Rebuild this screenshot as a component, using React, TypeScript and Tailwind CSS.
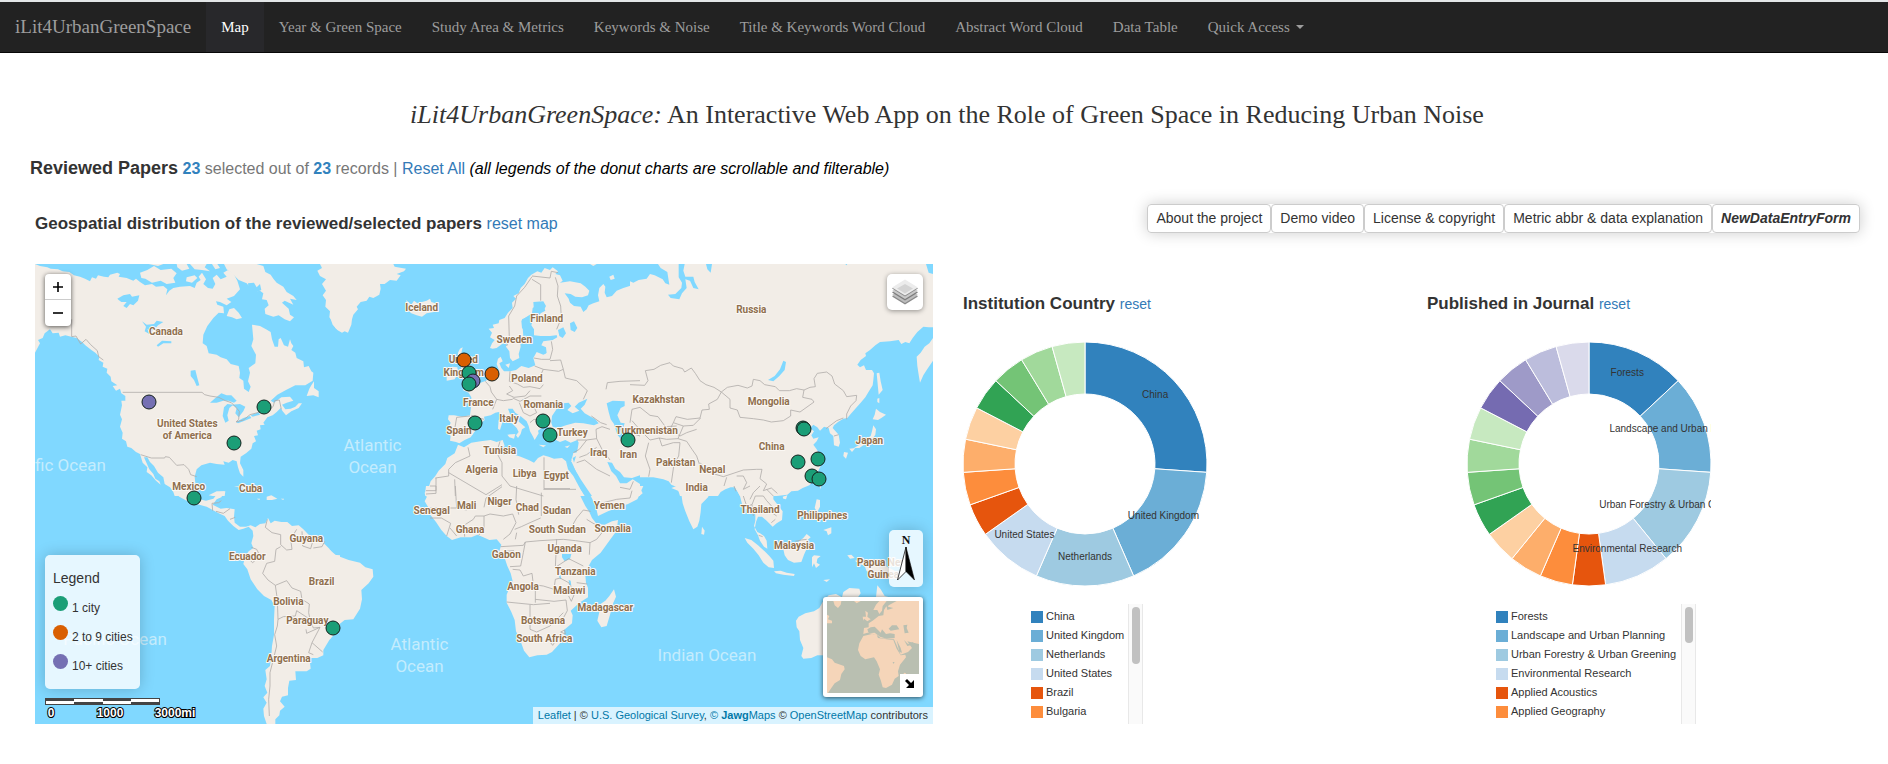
import React from "react";

type Pt = [string, number, number];
type Sheet = { ox: number; oy: number; land: string; water: string; borders: string; labels: Pt[] };

/* The base map is kept as six sheets, each drawn at three units per pixel. */
const sheets: Sheet[] = [
  {
    ox: 30,
    oy: 255,
    land:
      "M15 24L30 30 52 34 62 38 84 40 98 46 118 48 132 58 150 62 165 68 180 76 186 64 198 68 204 58 222 62 235 64 240 56 262 50 270 54 266 62 290 66 310 74 318 68 330 78 345 88 366 84 378 92 400 90 412 100 408 118 418 104 430 96 450 92 480 90 494 96 500 80 512 72 506 62 516 50 528 70 520 84 534 96 548 98 556 84 548 66 560 56 572 70 590 62 580 50 594 42 610 52 622 74 630 100 612 120 590 128 604 138 590 148 570 138 558 136 562 146 580 152 582 172 566 170 550 186 532 210 520 236 518 262 530 270 536 292 560 296 572 304 590 310 602 324 626 330 630 350 628 366 640 374 642 398 656 408 662 392 654 376 660 350 656 336 676 322 678 296 664 270 670 250 666 206 690 210 708 220 722 228 726 250 734 272 744 272 746 250 752 246 762 268 774 272 780 250 784 262 790 270 784 282 796 290 800 306 820 316 822 334 836 330 844 346 850 350 848 374 826 388 796 388 768 402 742 416 722 434 732 440 754 424 780 422 790 434 770 440 756 446 766 460 782 458 796 452 806 442 816 442 806 456 784 466 768 478 758 466 752 456 740 468 728 478 712 484 700 500 704 506 690 508 692 520 680 524 684 538 672 540 678 556 668 562 664 578 648 592 632 602 630 622 640 642 640 662 630 652 624 634 620 616 608 612 596 620 580 616 584 626 560 624 540 620 514 628 500 640 494 662 496 682 502 720 434 720 430 708 420 694 404 684 400 664 384 650 372 630 360 618 352 604 342 604 350 622 358 640 370 654 376 668 388 676 392 686 378 674 364 658 350 648 352 634 338 620 330 594 318 588 304 576 292 572 288 556 276 548 278 530 270 512 276 490 270 476 276 448 274 434 286 434 286 420 274 412 270 398 258 404 248 390 262 388 244 376 242 362 230 350 232 338 218 332 220 320 206 312 208 302 196 290 184 282 166 268 156 258 140 246 124 242 106 238 90 242 86 230 68 232 60 220 44 232 38 246 24 252 30 262 15 290Z M330 50L352 42 372 30 392 42 424 38 440 52 430 66 436 80 410 84 392 74 366 80 346 68 334 66Z M356 24L400 24 384 30Z M440 24L470 24 478 38 456 44 442 34Z M470 64L494 58 502 66 486 80 468 76Z M480 24L530 24 524 34 540 46 516 42 494 40Z M546 24L562 24 570 36 556 40Z M582 24L680 24 700 30 706 48 722 56 730 68 740 80 760 92 770 108 790 120 800 132 780 128 790 146 764 134 756 140 776 158 780 176 792 184 780 196 764 190 746 178 730 182 706 174 704 158 716 148 710 132 696 130 700 112 690 104 672 108 660 94 650 82 626 72 606 52 590 40Z M590 180L598 160 612 156 626 170 636 186 620 190 606 184Z M838 398L844 388 852 376 852 396 866 406 866 424 850 418 830 420Z M862 44L876 36 870 24 930 24 930 226 916 216 908 196 898 184 900 166 886 152 888 132 878 118 888 104 876 84 888 70 870 60Z M536 718L560 706 586 706 584 720 548 720Z",
    water:
      "M262 128L280 118 300 114 306 122 328 118 324 134 310 148 300 144 290 156 280 150 290 138 274 138 266 132Z M336 196L350 206 372 204 380 194 400 198 384 208 374 220 362 226 352 218 358 234 344 226 348 212Z M380 268L396 254 424 256 424 262 400 262 384 272Z M482 344L496 342 502 366 508 388 500 390 492 372 482 360Z M540 440L556 426 574 412 590 418 604 418 620 434 612 440 596 434 580 434 560 440Z M582 454L592 444 610 446 598 456 592 478 596 494 586 500 578 480Z M606 446L630 444 646 452 640 466 626 484 616 472 620 456Z M618 498L640 486 660 480 664 486 640 496 624 502Z M662 478L686 468 690 476 668 482Z M654 82L672 80 680 94 690 84 694 102 676 110 656 106Z",
    borders:
      "M125 190L125 242 138 240 152 264 168 250 182 266 202 284 206 302 220 312 M278 409L516 409 524 416 540 420 566 424 586 434 604 440 616 452 628 466 626 490 618 498 640 492 660 476 690 468 720 462 730 450 734 434 748 432 754 460 M332 596L364 606 404 606 406 602 418 604 440 628 462 626 476 640 482 656 500 662",
    labels: [["Canada", 408, 229], ["United States", 472, 503], ["of America", 472, 539], ["Mexico", 476, 694], ["Cuba", 662, 700]],
  },
  {
    ox: 330,
    oy: 255,
    land:
      "M0 24L190 24 194 32 228 38 222 46 200 54 212 58 200 74 180 72 164 84 150 84 152 98 148 116 130 126 118 122 110 134 92 138 80 152 84 160 70 176 66 190 64 206 54 230 44 226 36 230 22 222 8 206 0 184Z M228 132L244 146 252 134 262 142 276 138 290 134 300 128 304 138 316 142 320 156 312 168 290 172 276 182 260 178 240 170 250 162 240 154 246 148 232 144Z M480 276L486 262 494 252 480 244 486 230 476 218 492 216 488 206 506 202 508 192 524 186 534 170 548 156 546 140 558 128 550 120 566 112 572 96 584 84 594 66 604 56 622 46 634 50 644 36 660 42 668 34 684 46 676 54 690 58 698 74 690 80 720 76 752 82 766 92 778 104 774 118 756 124 736 122 722 114 704 112 716 128 720 142 728 158 716 178 720 196 712 214 700 222 690 236 660 240 632 240 612 238 612 220 604 208 608 194 624 184 632 172 646 164 640 150 620 148 608 156 606 172 588 184 574 194 576 216 592 232 586 244 570 250 572 272 566 294 568 306 548 316 540 306 538 286 528 272 532 258 516 264 500 276 488 278Z M712 130L720 140 732 150 752 152 760 168 770 160 776 148 790 142 808 136 804 118 808 96 820 84 826 92 824 110 830 124 846 120 860 104 880 96 906 88 930 78 930 400 700 320 680 236 700 200Z M766 720L752 700 742 676 728 652 716 632 708 616 696 606 672 608 656 602 640 598 624 606 612 620 596 612 572 602 546 594 518 596 512 584 524 570 518 552 500 558 482 552 452 556 424 560 402 574 384 566 374 592 352 606 346 624 326 644 316 660 302 676 296 694 284 710 286 720Z M780 720L760 690 740 650 724 616 730 590 930 590 930 720Z M720 250L692 238 668 252 640 256 634 268 648 274 650 292 640 296 620 288 610 306 616 328 596 336 574 330 558 342 540 346 522 346 514 336 508 322 518 316 512 302 504 308 500 324 508 346 492 358 476 366 466 376 452 382 440 394 426 396 418 390 406 398 398 402 416 410 424 424 444 420 478 396 482 372 480 356 478 354 490 364 500 356 516 354 532 362 540 360 552 378 556 388 562 404 552 422 548 432 530 436 520 450 508 460 500 462 488 480 482 496 472 508 466 520 484 532 492 548 502 560 516 566 528 560 544 574 532 576 520 586 516 568 506 556 492 540 478 536 458 548 458 556 470 574 482 590 496 596 510 602 530 610 540Z M480 362L492 372 540 360 616 330 640 300 700 250 930 260 930 650 740 650 724 608 732 604 742 584 746 560 742 552 722 560 706 552 690 558 670 548 660 540 664 520 652 512 640 512 624 524 626 532 614 552 608 540 600 526 596 510 590 496 574 482 556 470 548 458 534 458 540 474 556 488 572 502 586 514 576 520 572 534 564 546 558 538 566 528 560 516 548 504 532 492 518 482 506 468 496 470 482 478 462 482 464 492 448 504 438 512 436 524 422 544 404 552 388 562 378 558 360 554 362 540 352 532 356 516 362 500 354 490 356 478 372 478 396 482 420 478 424 444 424 424 416 410 398 402 408 396 418 390 426 396 440 394 452 380 468 374Z M384 290L390 278 398 274 394 290 414 296 408 312 420 326 426 344 442 354 450 366 444 380 424 384 400 390 410 376 398 370 404 352 394 338 392 320 382 308Z M350 348L366 332 382 334 384 352 374 370 350 374Z M506 492L514 484 516 502 510 522 504 518Z M532 536L556 534 552 548 538 544Z M626 566L648 568 640 574Z M704 572L720 568 712 576Z M838 62L850 56 854 68 842 72Z M780 24L800 24 790 30Z M526 326L540 322 536 336Z".replace(
        /M720 250L692 238.*?610 540Z/,
        "M720 250L692 238 668 252 640 256 634 268 648 274 650 292 640 296 620 288 610 306 616 328 596 336 574 330 558 342 540 346 522 346 514 336 508 322 518 316 512 302 504 308 500 324 508 346 492 358 476 366 540 400 700 400 930 400 930 260Z"
      ),
    water:
      "M664 500L666 480 682 456 700 442 716 440 724 450 712 462 728 472 748 464 734 452 746 440 772 428 764 446 752 458 764 472 796 490 806 502 792 508 760 502 736 500 708 508 684 516 668 512Z M830 442L848 434 884 436 884 450 872 456 862 478 872 500 884 502 878 520 890 544 880 558 862 536 852 504 842 490 836 468Z M610 138L640 136 648 150 640 166 612 166Z M576 190L606 176 602 212 612 236 580 240 578 216Z M684 222L700 214 708 232 698 246 688 240Z M720 202L732 196 742 216 734 228 722 222Z M832 618L846 620 856 638 870 648 882 664 906 666 930 658 930 684 908 670 890 682 870 682 858 660 844 646Z M708 616L722 640 724 628 734 640 752 670 772 700 786 720 764 720 746 690 730 660 714 640Z M728 606L738 600 732 620Z",
    borders:
      "M530 270L538 250 536 180 554 150 560 120 584 94 606 62 M606 70L632 86 632 134 M606 60L660 66 664 46 684 50 M676 64L684 90 682 120 692 150 694 186 680 220 M664 256L668 280 660 310 634 310 612 306 M660 314L692 312 700 340 686 346 640 340 628 366 634 380 M614 330L640 340 M700 340L706 366 740 374 772 404 760 430 M540 346L538 376 562 384 580 394 600 392 630 398 640 386 M538 390L548 404 530 414 552 424 586 420 600 404 M466 376L480 392 484 408 500 430 488 460 M500 430L520 434 548 430 M548 426L570 436 600 420 634 420 M568 440L580 470 600 480 620 470 606 440 M600 500L612 490 650 492 M740 552L770 552 800 548 798 520 816 512 M784 480L812 500 830 506 M800 548L816 580 840 612 M770 552L748 580 730 590 M748 604L770 596 800 574 M740 620L764 612 800 640 840 660 M420 480L380 484 374 520 M424 478L462 490 M356 640L356 660 316 666 M414 574L420 600 376 620 356 640 M510 556L500 590 516 620 516 660 540 690 640 720 M642 604L642 698 720 698 M356 650L468 716 516 686 M374 670L376 720 M288 714L318 712 318 666 M828 400L832 380 870 376 930 374 M866 520L900 530 930 540 M816 512L840 520 M870 694L900 700 910 676",
    labels: [["Iceland", 275, 155], ["Finland", 650, 189], ["Sweden", 553, 253], ["United", 400, 313], ["Kingdom", 401, 350], ["Poland", 591, 368], ["France", 445, 441], ["Romania", 640, 448], ["Italy", 537, 489], ["Spain", 387, 526], ["Turkey", 727, 530], ["Tunisia", 509, 584], ["Iraq", 806, 592], ["Iran", 895, 596], ["Algeria", 455, 642], ["Libya", 584, 654], ["Egypt", 679, 659]],
  },
  {
    ox: 630,
    oy: 255,
    land:
      "M0 24L909 24 909 214 896 214 880 212 862 228 848 246 838 262 826 258 814 264 806 252 780 256 750 258 736 268 720 282 706 292 708 300 692 312 682 326 690 334 702 328 708 342 726 342 732 352 730 372 728 388 714 410 706 424 692 440 676 458 662 474 652 486 640 488 624 498 612 508 608 516 626 536 630 560 626 572 612 568 610 540 600 532 596 516 582 512 570 524 562 514 550 506 540 516 552 526 544 538 550 548 566 544 560 556 550 566 560 580 566 590 576 606 572 630 562 650 552 672 538 688 518 696 504 704 484 706 472 716 440 720 330 720 316 694 302 694 286 700 272 708 264 720 150 720 142 694 124 686 116 676 100 670 70 664 30 664 12 656 0 648Z M0 684L12 680 30 696 38 712 28 720 0 720Z M909 246L898 262 884 272 872 290 860 302 862 330 866 356 870 380 880 358 890 342 909 314Z M740 352L748 350 752 376 758 402 746 416Z M742 428L748 426 748 442 742 438Z M738 458L750 468 768 476 754 486 744 492 728 490 734 476Z M730 508L738 520 736 536 728 548 736 556 720 566 700 568 688 576 672 576 696 562 706 550 722 540 726 526Z M642 588L654 590 648 608 640 600Z M658 578L676 576 666 588Z M566 684L574 676 572 700Z",
    water:
      "M0 24L84 24 92 36 112 48 118 86 106 82 98 70 74 58 60 54 50 68 26 72 10 80 0 76Z M146 24L164 24 160 44 166 62 190 62 194 78 206 100 190 96 180 74 166 70 170 96 156 112 148 130 122 126 114 116 136 114 154 96 156 80 146 64Z M228 24L246 24 242 50 232 40Z M414 372L434 360 450 340 460 314 468 318 464 342 448 360 430 376Z M888 24L909 24 909 54 896 50Z M646 24L652 24 649 28Z",
    borders:
      "M0 386L44 388 54 374 46 344 72 340 92 328 120 320 130 330 158 338 164 348 184 336 196 352 210 374 228 386 252 394 274 408 292 394 324 388 352 396 366 390 370 370 390 374 404 386 436 392 448 404 478 404 500 398 522 402 540 394 556 392 552 368 562 352 590 348 606 360 614 384 640 404 650 422 680 418 678 434 662 450 650 474 650 490 M274 408L300 430 300 456 322 462 330 484 370 488 400 492 424 498 460 494 482 480 482 462 510 468 552 438 546 430 518 424 522 402 M274 408L262 430 236 444 238 460 216 462 210 486 172 490 138 482 130 500 160 510 190 508 212 486 M0 500L6 460 30 454 60 478 84 482 106 512 140 510 M130 500L120 520 150 540 170 530 200 520 M160 510L144 548 110 550 88 546 60 552 34 526 6 494 M144 548L170 556 186 580 200 600 210 630 M88 546L96 570 130 560 150 560 146 600 132 624 124 680 M56 560L46 600 60 640 56 662 M210 620L240 650 280 662 340 642 380 640 396 640 M290 664L282 690 M320 660L340 660 350 680 340 700 360 690 M396 640L390 668 410 684 400 704 424 696 442 712 M588 518L620 494 640 486 M612 540L626 536",
    labels: [["Russia", 364, 161], ["Kazakhstan", 86, 433], ["Mongolia", 416, 437], ["Turkmenistan", 50, 526], ["Japan", 718, 555], ["China", 425, 572], ["Pakistan", 137, 620], ["Nepal", 247, 641], ["India", 200, 695]],
  },
  {
    ox: 30,
    oy: 485,
    land:
      "M430 0L434 18 448 32 470 44 500 54 530 62 552 74 566 82 584 90 594 104 610 120 626 132 640 128 656 122 668 134 670 150 664 172 670 186 656 196 646 210 640 234 652 250 662 280 682 310 702 330 724 342 734 360 732 400 732 446 726 480 724 510 720 540 706 552 710 580 704 600 712 620 700 634 710 650 700 668 702 690 710 714 736 714 736 700 748 688 750 674 764 662 750 646 756 632 774 628 774 606 778 584 798 582 796 556 830 556 842 548 840 530 824 526 836 516 862 516 880 508 880 492 898 462 912 446 930 424 930 208 910 206 898 188 880 170 880 160 862 154 836 146 820 130 806 118 786 120 772 108 754 108 734 104 722 112 714 96 706 112 690 114 676 124 662 118 648 122 630 122 614 110 612 92 614 70 590 66 572 68 548 56 560 40 574 34 584 16 566 18 550 38 528 44 508 40 498 20 500 0Z M612 0L640 2 664 14 690 20 662 22 640 8Z M710 32L724 28 742 38 726 42 710 42Z M680 38L690 38 688 42Z M752 38L762 38 760 42Z",
    water: "",
    borders:
      "M548 74L546 52 566 50 574 44 M558 76L580 82 600 68 M600 100L616 94 M712 100L706 124 726 140 752 146 752 176 770 192 786 190 782 160 800 130 M816 136L818 180 842 188 850 160 M850 186L876 182 884 166 M646 210L668 230 690 210 680 190 664 184 M752 182L738 190 734 226 710 232 698 262 714 282 736 298 770 284 786 306 812 316 816 340 838 354 836 380 840 400 800 374 796 390 760 392 744 400 742 420 734 446 740 480 730 520 720 560 720 600 716 640 718 690 M736 298L742 340 744 400 M840 400L850 426 870 424 846 470 836 500 850 506 M870 424L830 442 828 430 M846 470L878 498",
    labels: [["Guyana", 829, 160], ["Ecuador", 652, 212], ["Brazil", 875, 289], ["Bolivia", 775, 349], ["Paraguay", 832, 406], ["Argentina", 776, 520]],
  },
  {
    ox: 330,
    oy: 485,
    land:
      "M288 0L286 16 290 34 284 46 296 66 302 88 318 108 334 132 350 150 366 162 392 154 424 154 442 146 460 154 478 162 500 160 514 176 508 196 524 216 532 240 542 262 548 286 538 306 530 326 530 350 544 378 554 402 558 436 572 466 582 494 598 514 622 508 650 506 666 498 690 472 704 452 702 432 726 412 728 388 722 374 748 350 774 334 774 306 768 290 766 268 776 240 786 222 812 200 838 164 860 134 864 102 846 106 824 116 800 114 786 96 778 78 766 60 754 36 742 10 736 0Z M764 0L782 30 796 56 804 90 834 76 866 64 894 54 922 40 930 24 930 0Z M852 310L858 332 850 350 840 386 830 420 814 424 802 404 808 378 806 358 826 344 838 330Z M0 192L18 208 56 222 90 230 106 244 128 250 130 272 116 292 94 312 96 340 90 368 70 400 44 402 26 416 12 436 0 460Z M836 64L846 66 840 70Z",
    water: "M696 204L724 204 720 220 704 226 696 214Z M688 252L694 278 690 280 684 260Z M716 282L722 284 724 300 718 298Z",
    borders:
      "M376 0L380 66 410 72 M380 66L300 66 M300 0L318 0 318 14 288 14 M462 64L468 36 516 2 M560 0L558 40 566 86 M640 10L738 10 M634 20L634 90 M462 90L480 84 520 90 548 84 558 110 540 144 520 160 M404 152L402 118 430 100 436 90 462 90 462 126 446 148 M380 120L402 118 M350 150L362 112 334 96 300 96 M360 126L380 150 M554 130L574 122 600 110 632 96 M556 160L560 140 M512 182L580 178 586 168 630 164 700 160 736 164 780 170 M524 196L552 194 M572 240L580 200 586 168 M540 242L572 240 M548 250L570 252 580 270 606 262 610 296 640 300 672 310 676 280 690 276 M616 296L616 350 M530 348L610 356 660 352 M600 356L600 430 620 438 660 420 700 380 M616 340L672 346 708 342 712 374 700 396 M680 160L676 244 716 218 760 240 M740 290L772 294 M690 276L716 290 734 322 724 346 716 330 M780 170L778 206 M782 76L760 72 740 96 724 124 M770 100L786 110 824 130 800 160 780 170 M662 470L676 466 668 478Z M692 438L704 432 706 444Z M820 50L860 40 900 36 906 14",
    labels: [["Niger", 509, 47], ["Mali", 410, 59], ["Chad", 592, 66], ["Yemen", 838, 60], ["Senegal", 305, 76], ["Sudan", 681, 75], ["Ghana", 420, 132], ["South Sudan", 682, 133], ["Somalia", 848, 129], ["Uganda", 704, 188], ["Gabon", 529, 208], ["Tanzania", 736, 257], ["Angola", 579, 303], ["Malawi", 718, 315], ["Madagascar", 826, 365], ["Botswana", 639, 404], ["South Africa", 643, 458]],
  },
  {
    ox: 630,
    oy: 485,
    land:
      "M124 6L140 0 270 0 256 14 240 20 234 34 214 54 212 78 208 104 202 122 190 130 178 106 166 76 158 52 154 24 144 14Z M0 0L40 0 30 22 0 40Z M0 122L4 124 2 140 0 140Z M216 122L224 134 222 146 214 144Z M312 0L322 16 330 30 336 54 344 70 366 70 376 86 376 104 372 120 382 138 390 142 402 150 410 164 412 188 402 182 390 164 384 148 374 130 378 108 384 92 396 92 410 104 428 122 440 112 456 102 458 76 444 58 430 40 430 22 446 12 470 10 500 6 516 0Z M458 32L472 28 468 40 460 38Z M344 156L364 162 384 178 404 196 418 210 430 224 432 246 416 244 400 230 386 208 370 188 352 170Z M432 256L452 254 470 260 494 264 492 270 460 266 438 262Z M460 190L484 184 500 172 520 156 530 144 542 154 530 164 532 184 522 206 514 228 492 230 474 222 464 208Z M546 214L552 208 572 210 562 218 560 230 570 236 558 246 552 232 546 244Z M560 40L570 42 570 62 562 78 554 66Z M560 78L574 88 566 84Z M580 132L604 124 604 142 594 148 590 136Z M652 208L664 206 674 216 660 218Z M674 224L700 222 730 230 760 236 786 250 810 264 800 280 780 276 760 278 736 262 710 256 704 240 690 234Z M580 282L600 280 590 288Z M498 404L506 392 526 382 552 376 568 366 578 348 596 328 618 324 636 334 640 318 658 306 688 308 692 322 680 340 720 350 738 334 742 298 752 310 764 330 800 340 800 510 562 508 544 516 520 518 514 510 520 486 510 462 508 436 500 424Z",
    water: "",
    borders:
      "M340 30L350 60 366 56 376 30 400 30 410 44 430 66 446 76 M360 40L370 20 390 0 M406 80L420 76 440 90 M410 10L430 30 M386 148L398 152 M496 166L514 162 530 160 M312 0L318 16 M424 110L436 100 M366 56L370 90",
    labels: [["Thailand", 390, 72], ["Philippines", 577, 91], ["Malaysia", 492, 181], ["Papua New", 757, 232], ["Guinea", 760, 268]],
  },
];

const oceans: Pt[] = [
  ["Pacific Ocean", 54, 465],
  ["Atlantic", 372.5, 445],
  ["Ocean", 372.5, 467],
  ["Pacific Ocean", 115, 639],
  ["Atlantic", 419.5, 644],
  ["Ocean", 419.5, 666],
  ["Indian Ocean", 707, 655],
];

const GREEN = "#1b9e77";
const ORANGE = "#d95f02";
const PURPLE = "#7570b3";

const markers: [number, number, string][] = [
  [149, 401, PURPLE], [264, 406, GREEN], [234, 442, GREEN], [194, 497, GREEN], [333, 627, GREEN],
  [464, 359, ORANGE], [469, 372, GREEN], [473, 380, PURPLE], [469, 383, GREEN], [492, 373, ORANGE],
  [475, 422, GREEN], [543, 420, GREEN], [550, 434, GREEN], [628, 439, GREEN],
  [803, 427, GREEN], [804, 428, GREEN], [798, 461, GREEN], [818, 458, GREEN], [812, 475, GREEN], [819, 478, GREEN],
];

function WorldMap() {
  return (
    <svg className="absolute inset-0 h-full w-full" viewBox="35 263 898 460" preserveAspectRatio="xMinYMin slice" aria-label="World map">
      {sheets.map((s) => (
        <g key={`${s.ox}-${s.oy}`} fill="#f2ede7" transform={`translate(${s.ox} ${s.oy}) scale(${1 / 3})`}>
          {s.land.split("M").slice(1).map((d, i) => (
            <path key={i} d={`M${d}`} />
          ))}
        </g>
      ))}
      {sheets.map((s) => (
        <g key={`${s.ox}-${s.oy}`} transform={`translate(${s.ox} ${s.oy}) scale(${1 / 3})`}>
          <path d={s.water} fill="#80d8ff" />
          <path d={s.borders} fill="none" stroke="#aeaba8" strokeWidth={2.4} strokeLinejoin="round" />
        </g>
      ))}
      <g className="font-['Roboto',sans-serif] text-[17px]" fill="#c4ecfd" textAnchor="middle">
        {oceans.map(([t, x, y], i) => (
          <text key={i} x={x} y={y + 5}>{t}</text>
        ))}
      </g>
      <g
        className="font-['Roboto',sans-serif] text-[10px] font-bold"
        fill="#8f6f4e"
        stroke="#fbf8f4"
        strokeWidth={2}
        strokeLinejoin="round"
        paintOrder="stroke"
        textAnchor="middle"
      >
        {sheets.map((s) =>
          s.labels.map(([t, x, y]) => (
            <text key={t} x={s.ox + x / 3} y={s.oy + y / 3 + 3}>{t}</text>
          ))
        )}
      </g>
      {markers.map(([x, y, c], i) => (
        <circle key={i} cx={x} cy={y} r={7} fill={c} stroke="#14211d" strokeWidth={1} />
      ))}
    </svg>
  );
}

function LayersIcon() {
  return (
    <svg viewBox="0 0 26 26" className="h-[26px] w-[26px]" aria-hidden="true">
      <path d="M0 17.500L13 10l13 7.500L13 25.500z" fill="#8a8a8a" />
      <path d="M0 16L13 8.500 26 16 13 24z" fill="#bdbdbd" />
      <path d="M0 13.500L13 6l13 7.500L13 21.500z" fill="#7d7d7d" />
      <path d="M0 12L13 4.500 26 12 13 20z" fill="#c9c9c9" />
      <path d="M0 9.500L13 2l13 7.500L13 17.500z" fill="#8a8a8a" />
      <path d="M0 8.500L13 .5l13 8L13 16.500z" fill="#ececec" />
      <path d="M5 9.500L13 5l8 4.500-8 5z" fill="#d4d4d4" />
    </svg>
  );
}

function MiniMap() {
  return (
    <svg viewBox="591 345 276 276" className="h-full w-full bg-[#b9bfb1]" aria-label="Overview map">
      <path
        fill="#f5d5b9"
        d="M610 345L634 345 632 356 624 366 614 358Z M672 345L692 345 680 352Z M591 386L598 390 594 400 606 404 606 412 591 412Z M706 374L714 380 712 392 722 400 712 406 702 398 700 404 698 392 708 392Z M730 372L738 356 748 345 770 345 758 360 756 374 748 384 742 372Z M762 372L768 362 790 350 800 345 867 345 867 474 850 470 832 466 846 486 834 498 812 506 800 478 792 460 770 458 752 456 740 446 712 440 700 444 702 426 716 424 716 412 728 404 746 390 760 388Z M700 450L726 444 740 446 744 456 770 460 790 462 800 488 812 508 826 506 828 514 810 536 804 556 806 570 794 578 786 596 768 606 758 604 752 582 746 566 750 550 740 526 732 514 706 520 692 510 684 492 688 472Z M822 560L828 562 822 586 814 582Z M591 514L606 520 614 530 642 540 644 550 634 564 630 582 614 592 604 606 594 621 591 621Z"
      />
      <path
        fill="#b9bfb1"
        d="M712 430L722 424 734 422 744 432 752 440 756 430 768 444 780 442 794 444 794 456 770 458 750 452 734 440 716 442Z M776 428L786 418 800 418 808 430 782 434Z M820 418L832 416 830 426 836 440 824 442Z M800 462L812 486 816 500 808 498Z M822 462L834 474 850 468 848 476 832 480Z M768 352L776 352 774 362 790 366 772 372Z M788 528L794 528 790 534Z"
      />
    </svg>
  );
}

function ControlPanel() {
  const items = [
    { label: "1 city", dot: "bg-[#1b9e77]" },
    { label: "2 to 9 cities", dot: "bg-[#d95f02]" },
    { label: "10+ cities", dot: "bg-[#7570b3]" },
  ];
  return (
    <div className="absolute top-[291px] left-[10px] h-[134px] w-[95px] rounded-[5px] bg-white/80 px-2 pt-[14px] text-[#333] shadow-[0_0_15px_rgba(0,0,0,0.2)]">
      <div className="mb-1 text-[14px] leading-[18px]">Legend</div>
      {items.map((i) => (
        <div key={i.label} className="flex h-[29px] items-center gap-1 text-[12px] whitespace-nowrap">
          <span className={`mb-1 h-[15px] w-[15px] shrink-0 rounded-full ${i.dot}`} />
          <span className="pt-1">{i.label}</span>
        </div>
      ))}
    </div>
  );
}

function ScaleBar() {
  return (
    <svg className="absolute top-[434px] left-[10px] h-[24px] w-[160px] font-['Liberation_Sans',Arial,sans-serif] text-[12px] font-bold" viewBox="0 0 160 24" aria-label="Scale">
      <rect width="115" height="7" fill="#444" />
      <rect x="1" y="3" width="28" height="3" fill="#fff" />
      <rect x="29" y="1" width="29" height="3" fill="#fff" />
      <rect x="58" y="3" width="28" height="3" fill="#fff" />
      <rect x="86" y="1" width="28" height="3" fill="#fff" />
      <g fill="#fff" stroke="#000" strokeWidth="2" paintOrder="stroke" textAnchor="middle">
        <text x="6" y="19">0</text>
        <text x="65" y="19">1000</text>
        <text x="130" y="19">3000mi</text>
      </g>
    </svg>
  );
}

function MapPanel() {
  return (
    <div className="relative h-[460px] overflow-hidden bg-[#80d8ff]">
      <WorldMap />
      <div className="absolute top-[10px] left-[10px] flex w-[26px] flex-col rounded-[4px] bg-white text-black shadow-[0_1px_5px_rgba(0,0,0,0.65)]">
        <button aria-label="Zoom in" className="grid h-[26px] place-items-center border-b border-[#ccc]">
          <svg viewBox="0 0 10 10" className="h-[10px] w-[10px]"><path d="M0 5h10M5 0v10" stroke="#000" strokeWidth="1.600" /></svg>
        </button>
        <button aria-label="Zoom out" className="grid h-[26px] place-items-center">
          <svg viewBox="0 0 10 10" className="h-[10px] w-[10px]"><path d="M0 5h10" stroke="#000" strokeWidth="1.600" /></svg>
        </button>
      </div>
      <button aria-label="Layers" className="absolute top-[10px] right-[10px] grid h-[36px] w-[36px] place-items-center rounded-[5px] bg-white shadow-[0_1px_5px_rgba(0,0,0,0.4)]">
        <LayersIcon />
      </button>
      <ControlPanel />
      <ScaleBar />
      <div className="absolute top-[266px] right-[10px] h-[57px] w-[34px] rounded-[5px] bg-white/80 shadow-[0_0_15px_rgba(0,0,0,0.2)]">
        <svg viewBox="0 0 34 57" className="h-full w-full" aria-label="North">
          <text x="17" y="14" textAnchor="middle" className="font-['Liberation_Serif',serif] text-[12px] font-bold" fill="#111">N</text>
          <path d="M17 17L8.500 50 17 41.500z" fill="#fff" stroke="#111" strokeWidth=".8" />
          <path d="M17 17L25.500 50 17 41.500z" fill="#000" stroke="#111" strokeWidth=".6" />
        </svg>
      </div>
      <div className="absolute top-[333px] right-[10px] h-[100px] w-[100px] rounded-[3px] bg-white p-1 shadow-[0_1px_5px_rgba(0,0,0,0.65)]">
        <MiniMap />
        <button aria-label="Toggle overview" className="absolute right-[4px] bottom-[4px] grid h-[19px] w-[19px] place-items-center bg-white">
          <svg viewBox="0 0 9 9" className="h-[9px] w-[9px]"><path d="M0 2L2 0 6 4 9 1V9H1L4 6z" fill="#000" /></svg>
        </button>
      </div>
      <div className="absolute right-0 bottom-0 h-[17px] bg-white/70 px-[5px] text-[11px] leading-[17px] whitespace-nowrap text-[#333]">
        <a href="#leaflet" className="text-[#0078a8]">Leaflet</a> | ©{" "}
        <a href="#usgs" className="text-[#0078a8]">U.S. Geological Survey</a>,{" "}
        <a href="#jawg" className="text-[#0078a8]">© <b>Jawg</b>Maps</a> ©{" "}
        <a href="#osm" className="text-[#0078a8]">OpenStreetMap</a> contributors
      </div>
    </div>
  );
}

const palette = [
  "#3182bd", "#6baed6", "#9ecae1", "#c6dbef", "#e6550d", "#fd8d3c", "#fdae6b", "#fdd0a2",
  "#31a354", "#74c476", "#a1d99b", "#c7e9c0", "#756bb1", "#9e9ac8", "#bcbddc", "#dadaeb",
];

function Donut({ counts, names }: { counts: number[]; names: string[] }) {
  const total = counts.reduce((a, b) => a + b, 0);
  const at = (r: number, a: number) => `${(122 + r * Math.sin(a)).toFixed(2)} ${(122 - r * Math.cos(a)).toFixed(2)}`;
  let acc = 0;
  const slices = counts.map((c, i) => {
    const a0 = (acc / total) * 2 * Math.PI;
    acc += c;
    const a1 = (acc / total) * 2 * Math.PI;
    const big = a1 - a0 > Math.PI ? 1 : 0;
    const mid = (a0 + a1) / 2;
    return {
      d: `M${at(122, a0)}A122 122 0 ${big} 1 ${at(122, a1)}L${at(70, a1)}A70 70 0 ${big} 0 ${at(70, a0)}Z`,
      x: 122 + 96 * Math.sin(mid),
      y: 122 - 96 * Math.cos(mid),
      fill: palette[i],
    };
  });
  return (
    <svg width="244" height="244" viewBox="0 0 244 244" className="block overflow-hidden">
      {slices.map((s, i) => (
        <path key={i} d={s.d} fill={s.fill} stroke="#fff" strokeWidth={1} />
      ))}
      <g className="text-[10px]" fill="#333" textAnchor="middle">
        {names.slice(0, 4).map((n, i) => (
          <text key={n} x={slices[i].x} y={slices[i].y}>{n}</text>
        ))}
      </g>
    </svg>
  );
}

const swatches = ["bg-[#3182bd]", "bg-[#6baed6]", "bg-[#9ecae1]", "bg-[#c6dbef]", "bg-[#e6550d]", "bg-[#fd8d3c]"];

function ChartLegend({ names, width, thumb }: { names: string[]; width: string; thumb: string }) {
  return (
    <div className={`flex h-[120px] overflow-hidden ${width}`}>
      <ul className="flex-1 pt-[3px]">
        {names.map((n, i) => (
          <li key={n} className="flex h-[19px] items-center gap-[3px] text-[11px] whitespace-nowrap text-[#333]">
            <span className={`h-[12px] w-[12px] shrink-0 ${swatches[i]}`} />
            {n}
          </li>
        ))}
      </ul>
      <div className="w-[15px] shrink-0 border-x border-[#e8e8e8] bg-[#fafafa] pt-[3px]">
        <div className={`mx-auto w-[8px] rounded-full bg-[#c1c1c1] ${thumb}`} />
      </div>
    </div>
  );
}

function ChartHeading({ title }: { title: string }) {
  return (
    <h2 className="mt-[28px] text-[17px] leading-[24px] font-bold whitespace-nowrap text-[#333]">
      {title} <a href="#reset" className="text-[14px] font-normal text-[#337ab7]">reset</a>
    </h2>
  );
}

const countries = ["China", "United Kingdom", "Netherlands", "United States", "Brazil", "Bulgaria"];
const journals = ["Forests", "Landscape and Urban Planning", "Urban Forestry & Urban Greening", "Environmental Research", "Applied Acoustics", "Applied Geography"];
const tabs = ["Map", "Year & Green Space", "Study Area & Metrics", "Keywords & Noise", "Title & Keywords Word Cloud", "Abstract Word Cloud", "Data Table"];
const actions = ["About the project", "Demo video", "License & copyright", "Metric abbr & data explanation"];

export default function App() {
  return (
    <div className="min-h-screen border-t-2 border-[#e3e6e8] bg-white font-['Liberation_Sans',Arial,sans-serif] text-[#333]">
      <nav className="flex h-[51px] items-stretch border-b border-[#080808] bg-[#222] font-['Liberation_Serif',serif] text-[15px] text-[#9d9d9d]">
        <a href="#home" className="flex items-center px-[15px] text-[19px]">iLit4UrbanGreenSpace</a>
        {tabs.map((t, i) => (
          <a key={t} href="#tab" className={`flex items-center px-[15px] ${i === 0 ? "bg-[#28282b] text-white" : ""}`}>
            {t}
          </a>
        ))}
        <button className="flex items-center gap-[6px] px-[15px]">
          Quick Access
          <svg viewBox="0 0 8 4" className="h-[4px] w-[8px]"><path d="M0 0h8L4 4z" fill="#9d9d9d" /></svg>
        </button>
      </nav>

      <h1 className="mt-[44px] pl-[6px] text-center font-['Liberation_Serif',serif] text-[26px] leading-[36px]">
        <i>iLit4UrbanGreenSpace:</i> An Interactive Web App on the Role of Green Space in Reducing Urban Noise
      </h1>

      <p className="mt-[23px] pl-[30px] text-[16px] leading-[24px] text-[#777]">
        <b className="text-[18px] text-[#333]">Reviewed Papers</b> <b className="text-[#3182bd]">23</b> selected out of{" "}
        <b className="text-[#3182bd]">23</b> records | <a href="#reset" className="text-[#337ab7]">Reset All</a>{" "}
        <i className="text-black">(all legends of the donut charts are scrollable and filterable)</i>
      </p>

      <div className="mt-[23px] flex items-start justify-between pr-[28px] pl-[35px]">
        <h2 className="mt-[8px] text-[17px] leading-[24px] font-bold">
          Geospatial distribution of the reviewed/selected papers{" "}
          <a href="#reset-map" className="text-[16px] font-normal text-[#337ab7]">reset map</a>
        </h2>
        <div className="flex rounded-[4px] text-[14px] shadow-[0_0_15px_rgba(0,0,0,0.2)]">
          {actions.map((a) => (
            <button key={a} className="h-[29px] rounded-[4px] border border-[#ccc] bg-white px-2 whitespace-nowrap">{a}</button>
          ))}
          <button className="h-[29px] rounded-[4px] border border-[#ccc] bg-white px-2 font-bold whitespace-nowrap italic">NewDataEntryForm</button>
        </div>
      </div>

      <main className="mt-[28px] grid grid-cols-[minmax(0,898fr)_minmax(0,434fr)_minmax(0,431fr)] gap-[30px] pr-[30px] pl-[35px]">
        <MapPanel />
        <section>
          <ChartHeading title="Institution Country" />
          <div className="mt-[26px]">
            <Donut counts={[6, 4, 3, 2, 1, 1, 1, 1, 1, 1, 1, 1]} names={countries} />
          </div>
          <div className="mt-[18px] ml-[68px]">
            <ChartLegend names={countries} width="w-[112px]" thumb="h-[57px]" />
          </div>
        </section>
        <section>
          <ChartHeading title="Published in Journal" />
          <div className="mt-[26px] ml-[40px]">
            <Donut counts={[3, 3, 3, 2, 1, 1, 1, 1, 1, 1, 1, 1, 1, 1, 1, 1]} names={journals} />
          </div>
          <div className="mt-[18px] ml-[69px]">
            <ChartLegend names={journals} width="w-[200px]" thumb="h-[36px]" />
          </div>
        </section>
      </main>
    </div>
  );
}
